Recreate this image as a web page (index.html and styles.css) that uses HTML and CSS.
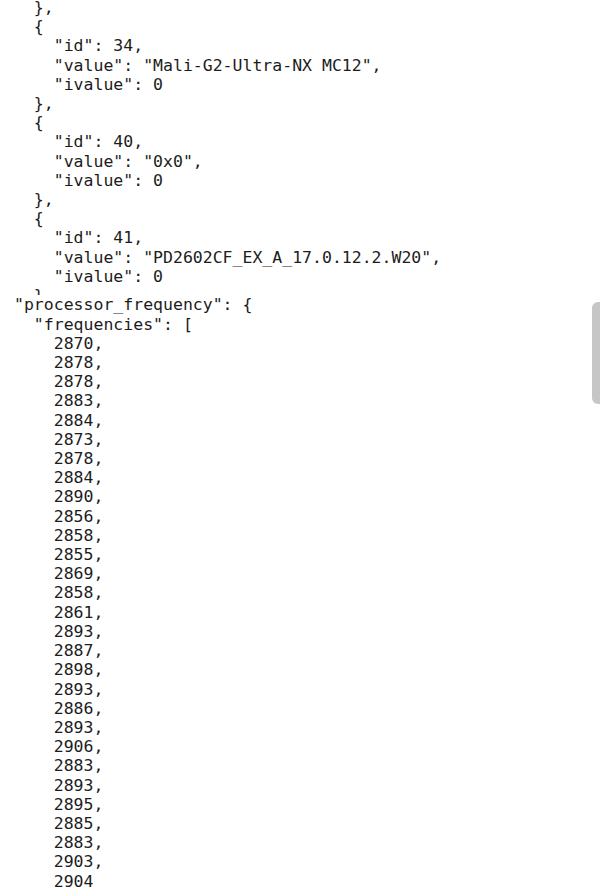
FILE: index.html
```html
<!DOCTYPE html>
<html>
<head>
<meta charset="utf-8">
<link rel="stylesheet" href="styles.css">
</head>
<body>
<div class="view">
<pre class="code">  },
  {
    "id": 34,
    "value": "Mali-G2-Ultra-NX MC12",
    "ivalue": 0
  },
  {
    "id": 40,
    "value": "0x0",
    "ivalue": 0
  },
  {
    "id": 41,
    "value": "PD2602CF_EX_A_17.0.12.2.W20",
    "ivalue": 0</pre>
<pre class="code peek">  }</pre>
<pre class="code">"processor_frequency": {
  "frequencies": [
    2870,
    2878,
    2878,
    2883,
    2884,
    2873,
    2878,
    2884,
    2890,
    2856,
    2858,
    2855,
    2869,
    2858,
    2861,
    2893,
    2887,
    2898,
    2893,
    2886,
    2893,
    2906,
    2883,
    2893,
    2895,
    2885,
    2883,
    2903,
    2904</pre>
<div class="thumb"></div>
</div>
</body>
</html>
```
FILE: styles.css
```css
html, body {
  margin: 0;
  padding: 0;
  background: #ffffff;
}
.view {
  width: 600px;
  height: 895px;
  overflow: hidden;
  position: relative;
}
.code {
  margin: 0;
  padding-left: 14px;
  font-family: "DejaVu Sans Mono", monospace;
  font-size: 16.5px;
  line-height: 19.2px;
  color: #1c1c1c;
  white-space: pre;
}
.code:first-child {
  margin-top: -2px;
}
.peek {
  height: 9.4px;
  overflow: hidden;
}
.thumb {
  position: absolute;
  right: 0;
  top: 302px;
  width: 8px;
  height: 102px;
  background: #c6c6c6;
  border-radius: 6px 0 0 6px;
}
```
